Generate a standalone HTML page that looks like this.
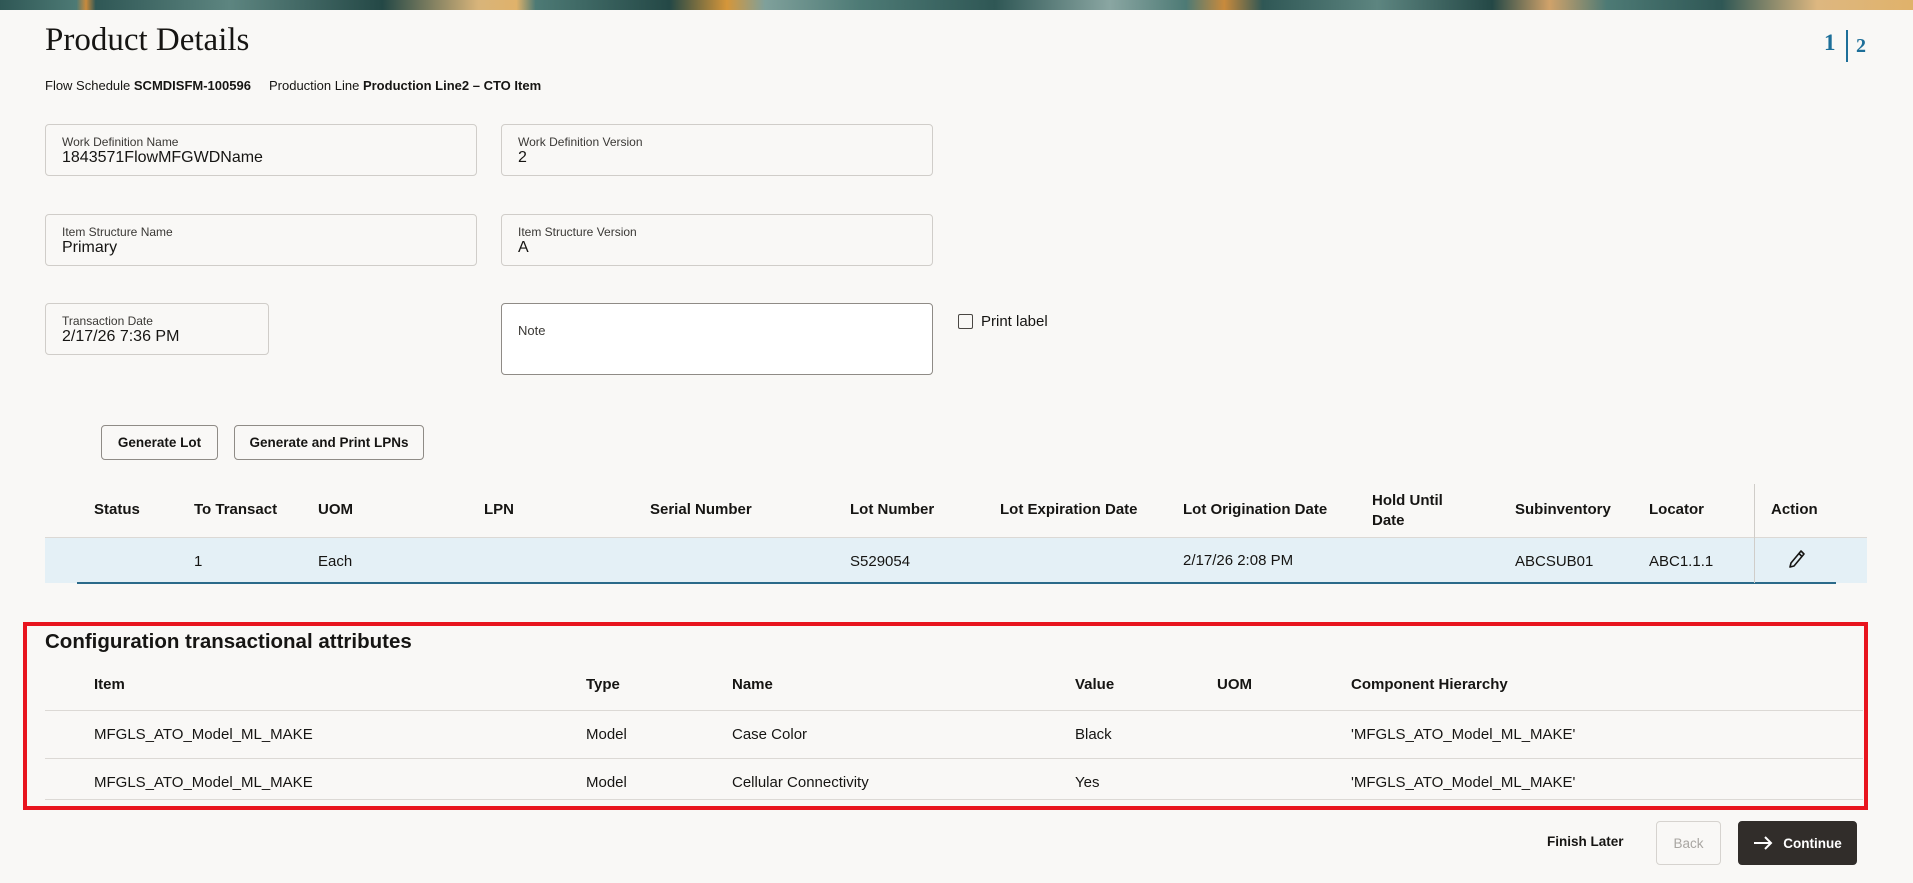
<!DOCTYPE html>
<html><head><meta charset="utf-8"><style>
*{margin:0;padding:0;box-sizing:border-box}
body{width:1913px;height:883px;overflow:hidden;background:#f9f8f6;font-family:"Liberation Sans",sans-serif;color:#161513;position:relative}
.a{position:absolute;white-space:nowrap}
.banner{position:absolute;left:0;top:0;width:1913px;height:10px;background:linear-gradient(90deg,#2f5755 0,#4d7a75 4%,#c98a3c 4.5%,#2f5755 5%,#5d8580 12%,#244846 20%,#d8b47a 25%,#e0b26a 27%,#4d7a75 28%,#244846 35%,#d5963a 38%,#7fa09b 40%,#4d7a75 45%,#2f5755 52%,#8aa6a2 58%,#4d7a75 62%,#c98a3c 64%,#2f5755 66%,#5d8580 72%,#244846 78%,#d0a26a 81%,#4d7a75 84%,#2f5755 90%,#ddb780 95%,#e0b26a 100%)}
.fld{position:absolute;border:1px solid #d0cdc9;border-radius:4px;background:#f9f8f6}
.fld .l{position:absolute;left:16px;top:10px;font-size:12px;color:#3a3835}
.fld .v{position:absolute;left:16px;top:24px;font-size:16px}
.btn{position:absolute;border:1px solid #8f8b86;border-radius:4px;font-size:13.5px;font-weight:bold;display:flex;align-items:center;justify-content:center;background:#f9f8f6}
.h{font-size:15px;font-weight:bold}
.c{font-size:15px}
.line{position:absolute;height:1px;background:#dcd9d5}
</style></head><body>
<div class="banner"></div>
<div class="a" style="left:45px;top:22px;font-family:'Liberation Serif',serif;font-size:33px">Product Details</div>
<div class="a" style="left:1824px;top:30px;font-family:'Liberation Serif',serif;font-size:23px;font-weight:bold;color:#1d6f99">1</div>
<div class="a" style="left:1846px;top:30px;width:2px;height:32px;background:#1d6f99"></div>
<div class="a" style="left:1856px;top:35px;font-family:'Liberation Serif',serif;font-size:20px;font-weight:bold;color:#1d6f99">2</div>
<div class="a" style="left:45px;top:78px;font-size:13px">Flow Schedule <b>SCMDISFM-100596</b>&nbsp;&nbsp;&nbsp;&nbsp;&nbsp;Production Line <b>Production Line2 – CTO Item</b></div>

<div class="fld" style="left:45px;top:124px;width:432px;height:52px"><div class="l">Work Definition Name</div><div class="v">1843571FlowMFGWDName</div></div>
<div class="fld" style="left:501px;top:124px;width:432px;height:52px"><div class="l">Work Definition Version</div><div class="v">2</div></div>
<div class="fld" style="left:45px;top:214px;width:432px;height:52px"><div class="l">Item Structure Name</div><div class="v">Primary</div></div>
<div class="fld" style="left:501px;top:214px;width:432px;height:52px"><div class="l">Item Structure Version</div><div class="v">A</div></div>
<div class="fld" style="left:45px;top:303px;width:224px;height:52px"><div class="l">Transaction Date</div><div class="v">2/17/26 7:36 PM</div></div>
<div class="fld" style="left:501px;top:303px;width:432px;height:72px;background:#fff;border-color:#8f8b86"><div class="l" style="top:19px;font-size:13px">Note</div></div>
<div class="a" style="left:958px;top:314px;width:15px;height:15px;border:1.5px solid #4a4743;border-radius:2px"></div>
<div class="a" style="left:981px;top:313px;font-size:15px">Print label</div>

<div class="btn" style="left:101px;top:425px;width:117px;height:35px">Generate Lot</div>
<div class="btn" style="left:234px;top:425px;width:190px;height:35px">Generate and Print LPNs</div>

<div class="a" style="left:45px;top:537px;width:1822px;height:46px;background:#e4f0f6"></div>
<div class="line" style="left:45px;top:537px;width:1822px"></div>
<div class="a" style="left:77px;top:582px;width:1759px;height:2px;background:#2b6a8a"></div>
<div class="a" style="left:1754px;top:484px;width:1px;height:99px;background:#d0cdc9"></div>
<div class="a h" style="left:94px;top:501px">Status</div>
<div class="a h" style="left:194px;top:501px">To Transact</div>
<div class="a h" style="left:318px;top:501px">UOM</div>
<div class="a h" style="left:484px;top:501px">LPN</div>
<div class="a h" style="left:650px;top:501px">Serial Number</div>
<div class="a h" style="left:850px;top:501px">Lot Number</div>
<div class="a h" style="left:1000px;top:501px">Lot Expiration Date</div>
<div class="a h" style="left:1183px;top:501px">Lot Origination Date</div>
<div class="a h" style="left:1372px;top:491px;line-height:20px">Hold Until<br>Date</div>
<div class="a h" style="left:1515px;top:501px">Subinventory</div>
<div class="a h" style="left:1649px;top:501px">Locator</div>
<div class="a h" style="left:1771px;top:501px">Action</div>
<div class="a c" style="left:194px;top:553px">1</div>
<div class="a c" style="left:318px;top:553px">Each</div>
<div class="a c" style="left:850px;top:553px">S529054</div>
<div class="a c" style="left:1183px;top:552px">2/17/26 2:08 PM</div>
<div class="a c" style="left:1515px;top:553px">ABCSUB01</div>
<div class="a c" style="left:1649px;top:553px">ABC1.1.1</div>
<svg class="a" style="left:1788px;top:549px" width="18" height="20" viewBox="0 0 18 20"><path d="M13 2 L16 5 L6 17 L2 18 L3 14 Z M11 4.5 L14 7.5" fill="none" stroke="#161513" stroke-width="1.6" stroke-linejoin="round"/></svg>

<div class="a" style="left:23px;top:622px;width:1845px;height:188px;border:4px solid #e8141e"></div>
<div class="a" style="left:45px;top:630px;font-size:20.5px;font-weight:bold">Configuration transactional attributes</div>
<div class="a h" style="left:94px;top:676px">Item</div>
<div class="a h" style="left:586px;top:676px">Type</div>
<div class="a h" style="left:732px;top:676px">Name</div>
<div class="a h" style="left:1075px;top:676px">Value</div>
<div class="a h" style="left:1217px;top:676px">UOM</div>
<div class="a h" style="left:1351px;top:676px">Component Hierarchy</div>
<div class="line" style="left:45px;top:710px;width:1818px"></div>
<div class="a c" style="left:94px;top:726px">MFGLS_ATO_Model_ML_MAKE</div>
<div class="a c" style="left:586px;top:726px">Model</div>
<div class="a c" style="left:732px;top:726px">Case Color</div>
<div class="a c" style="left:1075px;top:726px">Black</div>
<div class="a c" style="left:1351px;top:726px">'MFGLS_ATO_Model_ML_MAKE'</div>
<div class="line" style="left:45px;top:758px;width:1818px"></div>
<div class="a c" style="left:94px;top:774px">MFGLS_ATO_Model_ML_MAKE</div>
<div class="a c" style="left:586px;top:774px">Model</div>
<div class="a c" style="left:732px;top:774px">Cellular Connectivity</div>
<div class="a c" style="left:1075px;top:774px">Yes</div>
<div class="a c" style="left:1351px;top:774px">'MFGLS_ATO_Model_ML_MAKE'</div>
<div class="line" style="left:45px;top:799px;width:1818px"></div>

<div class="a" style="left:1547px;top:834px;font-size:13.5px;font-weight:bold">Finish Later</div>
<div class="btn" style="left:1656px;top:821px;width:65px;height:44px;border-color:#d6d3cf;color:#a9a6a2;font-weight:normal">Back</div>
<div class="btn" style="left:1738px;top:821px;width:119px;height:44px;background:#312d2a;border-color:#312d2a;color:#fff">
<svg width="20" height="14" viewBox="0 0 20 14" style="margin-right:10px"><path d="M1 7 H18 M12 1 L18 7 L12 13" fill="none" stroke="#fff" stroke-width="2"/></svg>Continue</div>
</body></html>
